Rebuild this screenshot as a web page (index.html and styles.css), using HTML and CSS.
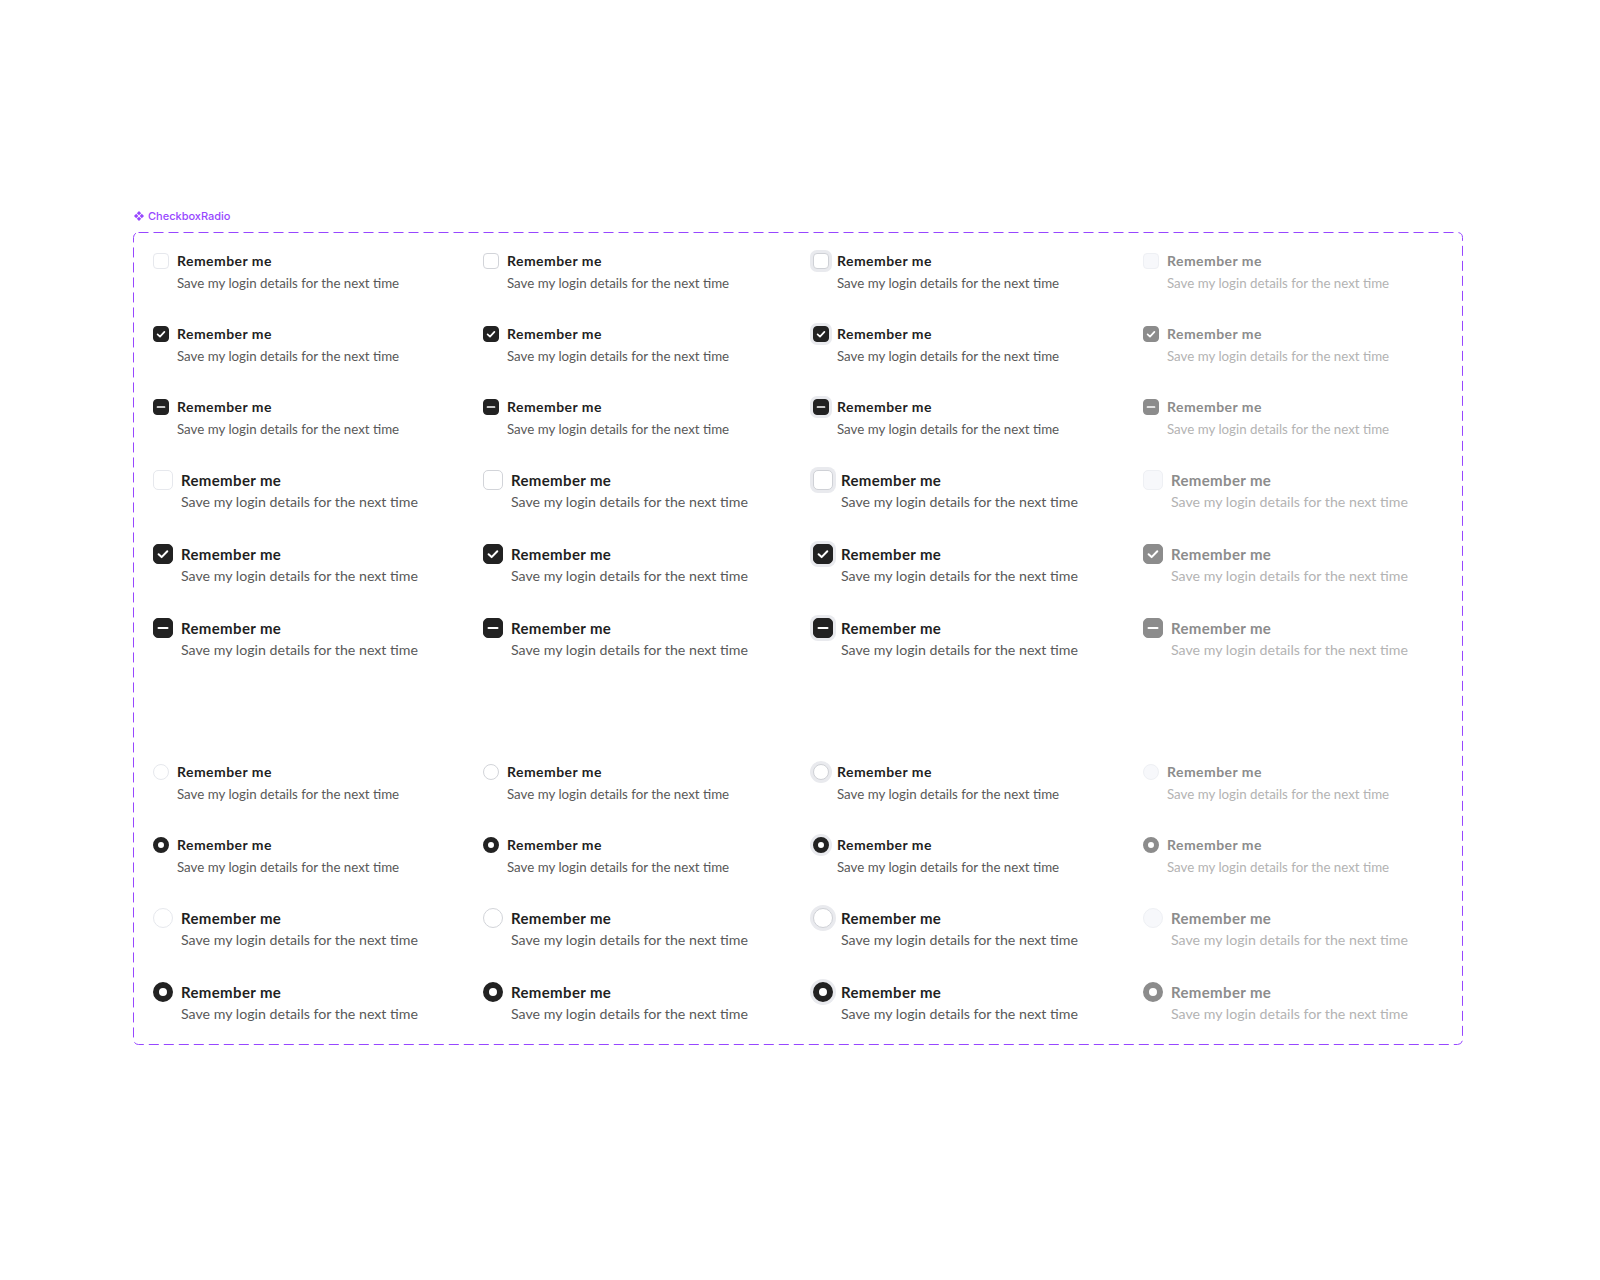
FILE: index.html
```html
<!DOCTYPE html>
<html lang="en">
<head>
<meta charset="utf-8">
<title>CheckboxRadio</title>
<link rel="stylesheet" href="styles.css">
</head>
<body>
<div class="page">
  <div class="set-label">
    <svg class="set-icon" viewBox="0 0 12 12" width="10" height="10" aria-hidden="true">
      <polygon points="6,0 8.6,2.6 6,5.2 3.4,2.6"/>
      <polygon points="2.6,3.4 5.2,6 2.6,8.6 0,6"/>
      <polygon points="9.4,3.4 12,6 9.4,8.6 6.8,6"/>
      <polygon points="6,6.8 8.6,9.4 6,12 3.4,9.4"/>
    </svg>
    <span>CheckboxRadio</span>
  </div>
  <div class="frame">
    <svg class="frame-border" width="1330" height="813" aria-hidden="true">
      <rect x="0.5" y="0.5" width="1329" height="812" rx="5" ry="5"/>
    </svg>

    <div class="group">
      <!-- small unchecked -->
      <div class="row sm">
        <div class="item"><span class="ctl cb"></span><div class="txt"><div class="ttl">Remember me</div><div class="dsc">Save my login details for the next time</div></div></div>
        <div class="item hover"><span class="ctl cb"></span><div class="txt"><div class="ttl">Remember me</div><div class="dsc">Save my login details for the next time</div></div></div>
        <div class="item focus"><span class="ctl cb"></span><div class="txt"><div class="ttl">Remember me</div><div class="dsc">Save my login details for the next time</div></div></div>
        <div class="item dis"><span class="ctl cb"></span><div class="txt"><div class="ttl">Remember me</div><div class="dsc">Save my login details for the next time</div></div></div>
      </div>
      <!-- small checked -->
      <div class="row sm">
        <div class="item"><span class="ctl cb on"><svg viewBox="0 0 16 16"><polyline points="4.6,8.3 7,10.6 11.4,5.9"/></svg></span><div class="txt"><div class="ttl">Remember me</div><div class="dsc">Save my login details for the next time</div></div></div>
        <div class="item hover"><span class="ctl cb on"><svg viewBox="0 0 16 16"><polyline points="4.6,8.3 7,10.6 11.4,5.9"/></svg></span><div class="txt"><div class="ttl">Remember me</div><div class="dsc">Save my login details for the next time</div></div></div>
        <div class="item focus"><span class="ctl cb on"><svg viewBox="0 0 16 16"><polyline points="4.6,8.3 7,10.6 11.4,5.9"/></svg></span><div class="txt"><div class="ttl">Remember me</div><div class="dsc">Save my login details for the next time</div></div></div>
        <div class="item dis"><span class="ctl cb on"><svg viewBox="0 0 16 16"><polyline points="4.6,8.3 7,10.6 11.4,5.9"/></svg></span><div class="txt"><div class="ttl">Remember me</div><div class="dsc">Save my login details for the next time</div></div></div>
      </div>
      <!-- small indeterminate -->
      <div class="row sm">
        <div class="item"><span class="ctl cb mix"><svg viewBox="0 0 16 16"><line x1="4.5" y1="8" x2="11.5" y2="8"/></svg></span><div class="txt"><div class="ttl">Remember me</div><div class="dsc">Save my login details for the next time</div></div></div>
        <div class="item hover"><span class="ctl cb mix"><svg viewBox="0 0 16 16"><line x1="4.5" y1="8" x2="11.5" y2="8"/></svg></span><div class="txt"><div class="ttl">Remember me</div><div class="dsc">Save my login details for the next time</div></div></div>
        <div class="item focus"><span class="ctl cb mix"><svg viewBox="0 0 16 16"><line x1="4.5" y1="8" x2="11.5" y2="8"/></svg></span><div class="txt"><div class="ttl">Remember me</div><div class="dsc">Save my login details for the next time</div></div></div>
        <div class="item dis"><span class="ctl cb mix"><svg viewBox="0 0 16 16"><line x1="4.5" y1="8" x2="11.5" y2="8"/></svg></span><div class="txt"><div class="ttl">Remember me</div><div class="dsc">Save my login details for the next time</div></div></div>
      </div>
      <!-- large unchecked -->
      <div class="row lg">
        <div class="item"><span class="ctl cb"></span><div class="txt"><div class="ttl">Remember me</div><div class="dsc">Save my login details for the next time</div></div></div>
        <div class="item hover"><span class="ctl cb"></span><div class="txt"><div class="ttl">Remember me</div><div class="dsc">Save my login details for the next time</div></div></div>
        <div class="item focus"><span class="ctl cb"></span><div class="txt"><div class="ttl">Remember me</div><div class="dsc">Save my login details for the next time</div></div></div>
        <div class="item dis"><span class="ctl cb"></span><div class="txt"><div class="ttl">Remember me</div><div class="dsc">Save my login details for the next time</div></div></div>
      </div>
      <!-- large checked -->
      <div class="row lg">
        <div class="item"><span class="ctl cb on"><svg viewBox="0 0 20 20"><polyline points="5.6,10.3 8.6,13.1 14.3,7.2"/></svg></span><div class="txt"><div class="ttl">Remember me</div><div class="dsc">Save my login details for the next time</div></div></div>
        <div class="item hover"><span class="ctl cb on"><svg viewBox="0 0 20 20"><polyline points="5.6,10.3 8.6,13.1 14.3,7.2"/></svg></span><div class="txt"><div class="ttl">Remember me</div><div class="dsc">Save my login details for the next time</div></div></div>
        <div class="item focus"><span class="ctl cb on"><svg viewBox="0 0 20 20"><polyline points="5.6,10.3 8.6,13.1 14.3,7.2"/></svg></span><div class="txt"><div class="ttl">Remember me</div><div class="dsc">Save my login details for the next time</div></div></div>
        <div class="item dis"><span class="ctl cb on"><svg viewBox="0 0 20 20"><polyline points="5.6,10.3 8.6,13.1 14.3,7.2"/></svg></span><div class="txt"><div class="ttl">Remember me</div><div class="dsc">Save my login details for the next time</div></div></div>
      </div>
      <!-- large indeterminate -->
      <div class="row lg">
        <div class="item"><span class="ctl cb mix"><svg viewBox="0 0 20 20"><line x1="5.5" y1="10" x2="14.5" y2="10"/></svg></span><div class="txt"><div class="ttl">Remember me</div><div class="dsc">Save my login details for the next time</div></div></div>
        <div class="item hover"><span class="ctl cb mix"><svg viewBox="0 0 20 20"><line x1="5.5" y1="10" x2="14.5" y2="10"/></svg></span><div class="txt"><div class="ttl">Remember me</div><div class="dsc">Save my login details for the next time</div></div></div>
        <div class="item focus"><span class="ctl cb mix"><svg viewBox="0 0 20 20"><line x1="5.5" y1="10" x2="14.5" y2="10"/></svg></span><div class="txt"><div class="ttl">Remember me</div><div class="dsc">Save my login details for the next time</div></div></div>
        <div class="item dis"><span class="ctl cb mix"><svg viewBox="0 0 20 20"><line x1="5.5" y1="10" x2="14.5" y2="10"/></svg></span><div class="txt"><div class="ttl">Remember me</div><div class="dsc">Save my login details for the next time</div></div></div>
      </div>
    </div>

    <div class="group radios">
      <div class="row sm">
        <div class="item"><span class="ctl rd"></span><div class="txt"><div class="ttl">Remember me</div><div class="dsc">Save my login details for the next time</div></div></div>
        <div class="item hover"><span class="ctl rd"></span><div class="txt"><div class="ttl">Remember me</div><div class="dsc">Save my login details for the next time</div></div></div>
        <div class="item focus"><span class="ctl rd"></span><div class="txt"><div class="ttl">Remember me</div><div class="dsc">Save my login details for the next time</div></div></div>
        <div class="item dis"><span class="ctl rd"></span><div class="txt"><div class="ttl">Remember me</div><div class="dsc">Save my login details for the next time</div></div></div>
      </div>
      <div class="row sm">
        <div class="item"><span class="ctl rd on"></span><div class="txt"><div class="ttl">Remember me</div><div class="dsc">Save my login details for the next time</div></div></div>
        <div class="item hover"><span class="ctl rd on"></span><div class="txt"><div class="ttl">Remember me</div><div class="dsc">Save my login details for the next time</div></div></div>
        <div class="item focus"><span class="ctl rd on"></span><div class="txt"><div class="ttl">Remember me</div><div class="dsc">Save my login details for the next time</div></div></div>
        <div class="item dis"><span class="ctl rd on"></span><div class="txt"><div class="ttl">Remember me</div><div class="dsc">Save my login details for the next time</div></div></div>
      </div>
      <div class="row lg">
        <div class="item"><span class="ctl rd"></span><div class="txt"><div class="ttl">Remember me</div><div class="dsc">Save my login details for the next time</div></div></div>
        <div class="item hover"><span class="ctl rd"></span><div class="txt"><div class="ttl">Remember me</div><div class="dsc">Save my login details for the next time</div></div></div>
        <div class="item focus"><span class="ctl rd"></span><div class="txt"><div class="ttl">Remember me</div><div class="dsc">Save my login details for the next time</div></div></div>
        <div class="item dis"><span class="ctl rd"></span><div class="txt"><div class="ttl">Remember me</div><div class="dsc">Save my login details for the next time</div></div></div>
      </div>
      <div class="row lg">
        <div class="item"><span class="ctl rd on"></span><div class="txt"><div class="ttl">Remember me</div><div class="dsc">Save my login details for the next time</div></div></div>
        <div class="item hover"><span class="ctl rd on"></span><div class="txt"><div class="ttl">Remember me</div><div class="dsc">Save my login details for the next time</div></div></div>
        <div class="item focus"><span class="ctl rd on"></span><div class="txt"><div class="ttl">Remember me</div><div class="dsc">Save my login details for the next time</div></div></div>
        <div class="item dis"><span class="ctl rd on"></span><div class="txt"><div class="ttl">Remember me</div><div class="dsc">Save my login details for the next time</div></div></div>
      </div>
    </div>
  </div>
</div>
</body>
</html>
```

FILE: styles.css
```css
html, body {
  margin: 0;
  padding: 0;
  background: #ffffff;
}

body {
  width: 1600px;
  height: 1280px;
  font-family: "Lato", "Liberation Sans", sans-serif;
  color: #1f1f1f;
}

.page {
  padding-top: 209px;
  padding-left: 133px;
}

.set-label {
  display: flex;
  align-items: center;
  gap: 4px;
  height: 14px;
  margin-bottom: 9px;
  font-family: "Inter", "Liberation Sans", sans-serif;
  font-size: 11px;
  font-weight: 500;
  line-height: 14px;
  color: #9747ff;
}

.set-icon {
  fill: #9747ff;
  margin-left: 1px;
}

.frame {
  position: relative;
  box-sizing: border-box;
  width: 1330px;
  height: 813px;
  padding: 19px 20px 20px 20px;
}

.frame-border {
  position: absolute;
  left: 0;
  top: 0;
  overflow: visible;
  pointer-events: none;
}

.frame-border rect {
  fill: none;
  stroke: #9747ff;
  stroke-width: 1;
  stroke-dasharray: 10 5;
}

.group {
  display: flex;
  flex-direction: column;
}

.group.radios {
  margin-top: 101px;
}

.row {
  display: grid;
  grid-template-columns: repeat(4, 300px);
  column-gap: 30px;
}

.row.sm + .row.sm {
  margin-top: 30px;
}

.row.sm + .row.lg {
  margin-top: 29px;
}

.row.lg + .row.lg {
  margin-top: 30px;
}

.item {
  display: flex;
  align-items: flex-start;
  gap: 8px;
}

.ttl {
  font-weight: 700;
  color: #1f1f1f;
}

.dsc {
  font-weight: 400;
  color: #595959;
}

.sm .ttl {
  font-size: 14px;
  line-height: 20px;
  letter-spacing: 0.45px;
}

.sm .dsc {
  font-size: 13.3px;
  line-height: 22px;
  margin-top: 1px;
}

.lg .ttl {
  font-size: 15px;
  line-height: 22px;
  letter-spacing: 0.35px;
}

.lg .dsc {
  font-size: 14.2px;
  line-height: 22px;
}

/* controls */
.ctl {
  flex: none;
  box-sizing: border-box;
  display: block;
  position: relative;
  background: #ffffff;
  border: 1px solid #e6e8ed;
}

.sm .ctl {
  width: 16px;
  height: 16px;
  margin-top: 2px;
}

.lg .ctl {
  width: 20px;
  height: 20px;
  margin-top: 1px;
}

.cb {
  border-radius: 4px;
}

.lg .cb {
  border-radius: 5px;
}

.cb svg {
  position: absolute;
  left: -1px;
  top: -1px;
  width: calc(100% + 2px);
  height: calc(100% + 2px);
  fill: none;
  stroke: #ffffff;
  stroke-width: 1.7;
  stroke-linecap: round;
  stroke-linejoin: round;
}

.lg .cb svg {
  stroke-width: 2;
}

.cb.on,
.cb.mix {
  background: #222222;
  border-color: #222222;
}

.rd {
  border-radius: 50%;
}

.rd.on {
  background: #ffffff;
  border: 5px solid #222222;
}

.lg .rd.on {
  border-width: 6px;
}

/* hover column */
.hover .ctl {
  border-color: #d2d4d9;
}

.hover .cb.on,
.hover .cb.mix,
.hover .rd.on {
  border-color: #222222;
}

/* focus column */
.focus .ctl {
  border-color: #cfd1d6;
  box-shadow: 0 0 0 3px #e9eaee;
}

.focus .cb.on,
.focus .cb.mix,
.focus .rd.on {
  border-color: #222222;
}

/* disabled column */
.dis .ttl {
  color: #8c8c8c;
}

.dis .dsc {
  color: #b3b3b3;
}

.dis .ctl {
  background: #f7f8fb;
  border-color: #eef0f4;
}

.dis .cb.on,
.dis .cb.mix {
  background: #8c8c8c;
  border-color: #8c8c8c;
}

.dis .rd.on {
  background: #ffffff;
  border-color: #8c8c8c;
}
```
